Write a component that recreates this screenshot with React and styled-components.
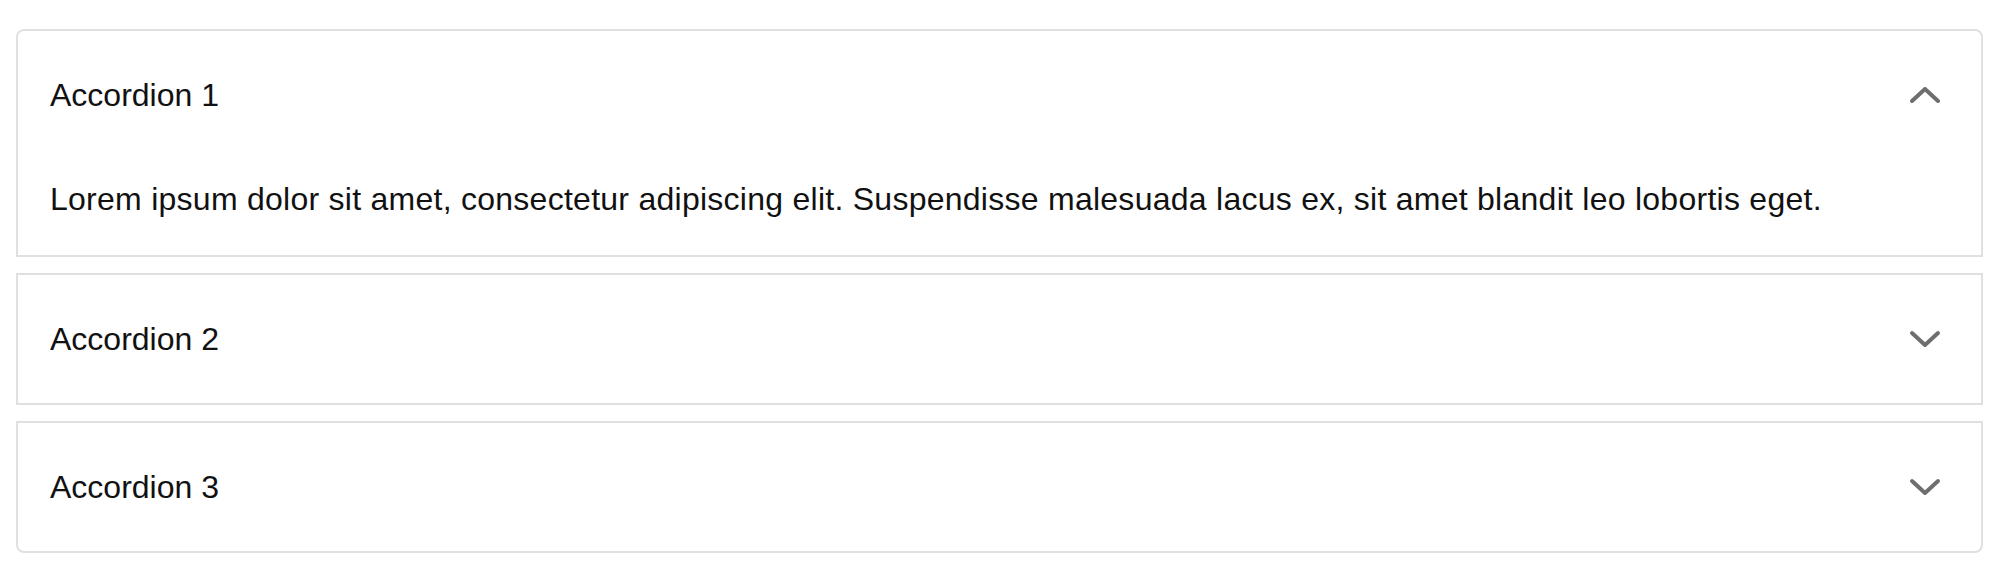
import React, { useState } from 'react';
import styled, { createGlobalStyle } from 'styled-components';

const GlobalStyle = createGlobalStyle`
  html, body {
    margin: 0;
    padding: 0;
    background: #ffffff;
  }
  body {
    font-family: "Liberation Sans", Arial, Helvetica, sans-serif;
    color: #111111;
  }
`;

const Page = styled.div`
  padding: 29px 15px 24px 16px;
  display: flex;
  flex-direction: column;
  gap: 16px;
`;

const Panel = styled.section`
  border: 2px solid #e0e0e0;
  background: #ffffff;

  &:first-child {
    border-top-left-radius: 8px;
    border-top-right-radius: 8px;
  }

  &:last-child {
    border-bottom-left-radius: 8px;
    border-bottom-right-radius: 8px;
  }
`;

const Summary = styled.button`
  all: unset;
  box-sizing: border-box;
  width: 100%;
  height: 128px;
  padding: 0 32px;
  display: flex;
  align-items: center;
  justify-content: space-between;
  cursor: pointer;
  font-family: inherit;
  font-size: 32px;
  line-height: 48px;
  color: #111111;
`;

const IconWrap = styled.span`
  width: 48px;
  height: 48px;
  display: flex;
  align-items: center;
  justify-content: center;
  transform: rotate(${(p) => (p.$open ? '180deg' : '0deg')});
`;

const Details = styled.div`
  padding: 16px 32px 32px;
  font-size: 32px;
  line-height: 48px;
  letter-spacing: 0.26px;
  color: #111111;
`;

const Chevron = () => (
  <svg width="32" height="18" viewBox="0 0 32 18" fill="none">
    <polyline
      points="3,3 16,15 29,3"
      stroke="#6e6e6e"
      strokeWidth="4"
      strokeLinecap="round"
      strokeLinejoin="round"
    />
  </svg>
);

const loremText =
  'Lorem ipsum dolor sit amet, consectetur adipiscing elit. Suspendisse malesuada lacus ex, sit amet blandit leo lobortis eget.';

const items = [
  { id: 1, title: 'Accordion 1', body: loremText },
  { id: 2, title: 'Accordion 2', body: loremText },
  { id: 3, title: 'Accordion 3', body: loremText },
];

const App = () => {
  const [open, setOpen] = useState(1);

  return (
    <>
      <GlobalStyle />
      <Page>
        {items.map((item) => {
          const isOpen = open === item.id;
          return (
            <Panel key={item.id}>
              <Summary onClick={() => setOpen(isOpen ? null : item.id)}>
                {item.title}
                <IconWrap $open={isOpen}>
                  <Chevron />
                </IconWrap>
              </Summary>
              {isOpen && <Details>{item.body}</Details>}
            </Panel>
          );
        })}
      </Page>
    </>
  );
};

export default App;
